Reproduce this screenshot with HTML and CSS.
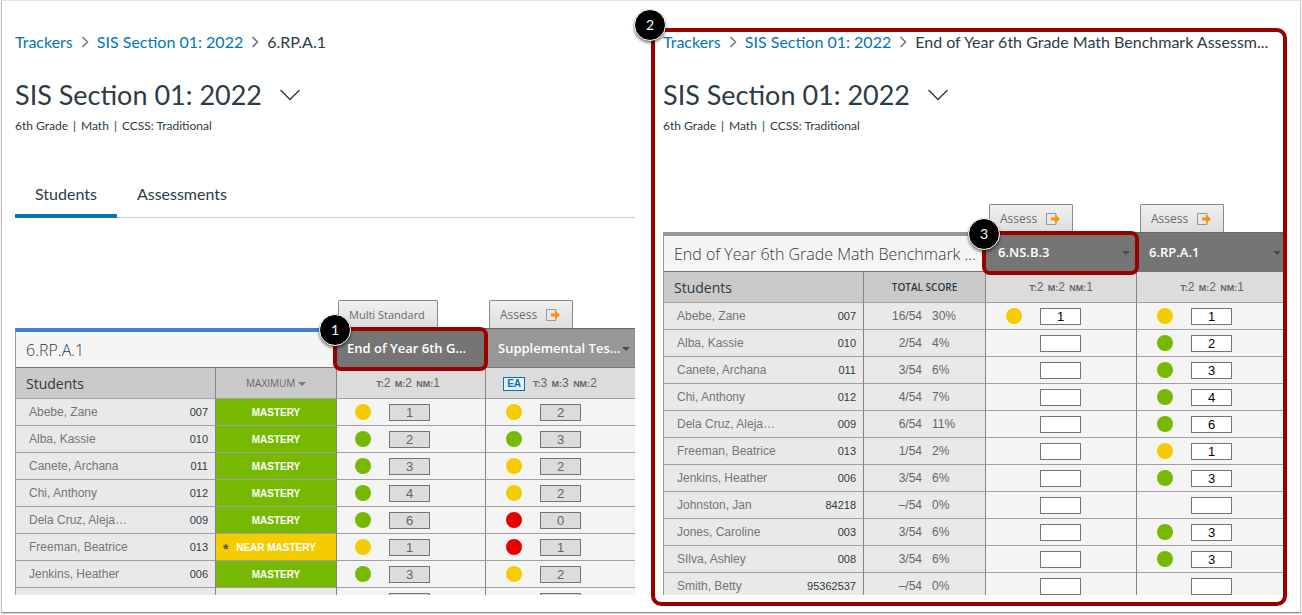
FILE: index.html
```html
<!DOCTYPE html>
<html lang="en">
<head>
    <meta charset="UTF-8">
    <meta name="viewport" content="width=device-width, initial-scale=1.0">
    <title>Trackers</title>
    <link rel="stylesheet" href="styles.css">
</head>
<body>
    <main class="sheet">
        <section class="panel">
            <nav class="breadcrumb">
                <a href="#">Trackers</a>
                <svg class="crumb-arrow" viewBox="0 0 8 12"><path d="M1.5 1 L6.5 6 L1.5 11"/></svg>
                <a href="#">SIS Section 01: 2022</a>
                <svg class="crumb-arrow" viewBox="0 0 8 12"><path d="M1.5 1 L6.5 6 L1.5 11"/></svg>
                <span class="current">6.RP.A.1</span>
            </nav>
            <div class="heading">
                <h1>SIS Section 01: 2022</h1>
                <button class="heading-toggle" aria-label="Change section">
                    <svg viewBox="0 0 20 12"><path d="M0.5 1 L10 10.5 L19.5 1"/></svg>
                </button>
            </div>
            <p class="meta"><span>6th Grade</span><span>|</span><span>Math</span><span>|</span><span>CCSS: Traditional</span></p>
            <div class="tabs">
                <button class="tab active">Students</button>
                <button class="tab">Assessments</button>
            </div>
            <div class="table-wrap by-standard">
                <table class="tracker">
                    <colgroup><col class="col-name"><col class="col-total"><col class="col-first"><col class="col-score"></colgroup>
                    <thead>
                        <tr class="row-actions">
                            <td colspan="2"></td>
                            <td class="first"><button class="action multi">Multi Standard</button></td>
                            <td><button class="action">Assess
                                <svg class="export" viewBox="0 0 14 12"><path class="box" d="M10 3 V0.5 H0.5 V11.5 H10 V9"/><path class="arrow" d="M5 4.5 H9 V1.5 L14 6 L9 10.5 V7.5 H5 Z"/></svg>
                            </button></td>
                        </tr>
                        <tr class="row-title">
                            <th colspan="2" class="title blue">6.RP.A.1</th>
                            <th class="dark first"><span class="col-title">End of Year 6th G...</span><span class="highlight"></span><span class="marker">1</span></th>
                            <th class="dark light"><span class="col-title">Supplemental Tes...</span><span class="caret"></span></th>
                        </tr>
                        <tr class="row-sub">
                            <th class="students">Students</th>
                            <th class="total">MAXIMUM <span class="caret"></span></th>
                            <th class="counts first"><b>T:</b>2 <b>M:</b>2 <b>NM:</b>1</th>
                            <th class="counts with-badge"><span class="ea">EA</span><b>T:</b>3 <b>M:</b>3 <b>NM:</b>2</th>
                        </tr>
                    </thead>
                    <tbody id="standardRows"></tbody>
                </table>
            </div>
        </section>

        <section class="panel outlined">
            <span class="marker">2</span>
            <nav class="breadcrumb">
                <a href="#">Trackers</a>
                <svg class="crumb-arrow" viewBox="0 0 8 12"><path d="M1.5 1 L6.5 6 L1.5 11"/></svg>
                <a href="#">SIS Section 01: 2022</a>
                <svg class="crumb-arrow" viewBox="0 0 8 12"><path d="M1.5 1 L6.5 6 L1.5 11"/></svg>
                <span class="current">End of Year 6th Grade Math Benchmark Assessm...</span>
            </nav>
            <div class="heading">
                <h1>SIS Section 01: 2022</h1>
                <button class="heading-toggle" aria-label="Change section">
                    <svg viewBox="0 0 20 12"><path d="M0.5 1 L10 10.5 L19.5 1"/></svg>
                </button>
            </div>
            <p class="meta"><span>6th Grade</span><span>|</span><span>Math</span><span>|</span><span>CCSS: Traditional</span></p>
            <div class="table-wrap by-assessment">
                <table class="tracker">
                    <colgroup><col class="col-name"><col class="col-total"><col class="col-score"><col class="col-score"></colgroup>
                    <thead>
                        <tr class="row-actions">
                            <td colspan="2"></td>
                            <td><button class="action">Assess
                                <svg class="export" viewBox="0 0 14 12"><path class="box" d="M10 3 V0.5 H0.5 V11.5 H10 V9"/><path class="arrow" d="M5 4.5 H9 V1.5 L14 6 L9 10.5 V7.5 H5 Z"/></svg>
                            </button></td>
                            <td><button class="action">Assess
                                <svg class="export" viewBox="0 0 14 12"><path class="box" d="M10 3 V0.5 H0.5 V11.5 H10 V9"/><path class="arrow" d="M5 4.5 H9 V1.5 L14 6 L9 10.5 V7.5 H5 Z"/></svg>
                            </button></td>
                        </tr>
                        <tr class="row-title">
                            <th colspan="2" class="title">End of Year 6th Grade Math Benchmark ...</th>
                            <th class="dark"><span class="col-title">6.NS.B.3</span><span class="caret"></span><span class="highlight"></span><span class="marker">3</span></th>
                            <th class="dark"><span class="col-title">6.RP.A.1</span><span class="caret"></span></th>
                        </tr>
                        <tr class="row-sub">
                            <th class="students">Students</th>
                            <th class="total strong">TOTAL SCORE</th>
                            <th class="counts"><b>T:</b>2 <b>M:</b>2 <b>NM:</b>1</th>
                            <th class="counts"><b>T:</b>2 <b>M:</b>2 <b>NM:</b>1</th>
                        </tr>
                    </thead>
                    <tbody id="assessmentRows"></tbody>
                </table>
            </div>
        </section>
    </main>

    <script>
        // name, id, level, then [colour, score] for each assessment
        const standardRows = [
            ["Abebe, Zane", "007", "mastery", ["yellow", 1], ["yellow", 2]],
            ["Alba, Kassie", "010", "mastery", ["green", 2], ["green", 3]],
            ["Canete, Archana", "011", "mastery", ["green", 3], ["yellow", 2]],
            ["Chi, Anthony", "012", "mastery", ["green", 4], ["yellow", 2]],
            ["Dela Cruz, Aleja…", "009", "mastery", ["green", 6], ["red", 0]],
            ["Freeman, Beatrice", "013", "near", ["yellow", 1], ["red", 1]],
            ["Jenkins, Heather", "006", "mastery", ["green", 3], ["yellow", 2]],
            ["", "", "", ["", ""], ["", ""]]
        ];

        // name, id, points, percent, then [colour, score] for each standard
        const assessmentRows = [
            ["Abebe, Zane", "007", "16/54", "30%", ["yellow", 1], ["yellow", 1]],
            ["Alba, Kassie", "010", "2/54", "4%", ["", ""], ["green", 2]],
            ["Canete, Archana", "011", "3/54", "6%", ["", ""], ["green", 3]],
            ["Chi, Anthony", "012", "4/54", "7%", ["", ""], ["green", 4]],
            ["Dela Cruz, Aleja…", "009", "6/54", "11%", ["", ""], ["green", 6]],
            ["Freeman, Beatrice", "013", "1/54", "2%", ["", ""], ["yellow", 1]],
            ["Jenkins, Heather", "006", "3/54", "6%", ["", ""], ["green", 3]],
            ["Johnston, Jan", "84218", "–/54", "0%", ["", ""], ["", ""]],
            ["Jones, Caroline", "003", "3/54", "6%", ["", ""], ["green", 3]],
            ["SIlva, Ashley", "008", "3/54", "6%", ["", ""], ["green", 3]],
            ["Smith, Betty", "95362537", "–/54", "0%", ["", ""], ["", ""]]
        ];

        function nameCell(name, id) {
            return `<td class="name"><div class="student"><span>${name}</span><span class="id">${id}</span></div></td>`;
        }

        function scoreCell(cell, label, extra, readonly) {
            return `<td class="score ${extra}"><div class="result"><span class="dot ${cell[0]}"></span>` +
                `<input type="text" value="${cell[1]}" aria-label="${label}" ${readonly ? "readonly" : ""}></div></td>`;
        }

        function levelCell(level) {
            if (level === "mastery") return `<td class="level mastery">MASTERY</td>`;
            if (level === "near") return `<td class="level near"><span class="star">*</span>NEAR MASTERY</td>`;
            return `<td class="level"></td>`;
        }

        document.getElementById("standardRows").innerHTML = standardRows.map(r =>
            `<tr>${nameCell(r[0], r[1])}${levelCell(r[2])}` +
            scoreCell(r[3], r[0] + " End of Year", "first", true) +
            scoreCell(r[4], r[0] + " Supplemental Test", "", true) + `</tr>`
        ).join("");

        document.getElementById("assessmentRows").innerHTML = assessmentRows.map(r =>
            `<tr>${nameCell(r[0], r[1])}<td class="points"><div class="pair"><span>${r[2]}</span><span>${r[3]}</span></div></td>` +
            scoreCell(r[4], r[0] + " 6.NS.B.3", "", false) +
            scoreCell(r[5], r[0] + " 6.RP.A.1", "", false) + `</tr>`
        ).join("");
    </script>
</body>
</html>
```

FILE: styles.css
```css
* { box-sizing: border-box; }
body { margin: 0; height: 100vh; padding: 0 1px 2px; background-color: #fbfbfb; font-family: Lato, sans-serif; color: #2d3b45; }
button { font: inherit; color: inherit; background: none; border: none; padding: 0; cursor: pointer; }

.sheet { display: flex; gap: 16px; height: 100%; padding: 27px 13px 6px; background-color: #fff; border: 1px solid #e2e2e2; border-left-color: #c0c0c0; border-right-color: #c8c8c8; border-bottom-color: #8a8a8a; box-shadow: 0 1px 1px #ddd; }
.panel { position: relative; display: flex; flex-direction: column; flex: 1 1 0; min-width: 0; padding: 4px 0 11px; }
.panel.outlined { flex-basis: 16px; border: 4px solid #990000; border-radius: 10px; padding: 0 0 7px 8px; }

/* Page header */
.breadcrumb { display: flex; align-items: center; gap: 8px; height: 20px; padding-right: 8px; font-size: 16px; line-height: 20px; white-space: nowrap; }
.breadcrumb a { color: #0374b5; text-decoration: none; }
.crumb-arrow { width: 8px; height: 12px; flex: none; fill: none; stroke: #6b7780; stroke-width: 1.6; }
.heading { display: flex; align-items: center; gap: 18px; margin-top: 25px; height: 36px; }
h1 { margin: 0; font-size: 27px; font-weight: 400; line-height: 36px; }
.heading-toggle svg { display: block; width: 20px; height: 12px; fill: none; stroke: #2d3b45; stroke-width: 1.4; }
.meta { display: flex; gap: 5px; margin: 4px 0 0; font-size: 12px; line-height: 18px; }
.tabs { display: flex; margin-top: 40px; height: 43px; border-bottom: 1px solid #c7cdd1; }
.tab { height: 43px; padding: 0 20px 6px; font-size: 16px; }
.tab.active { padding-bottom: 2px; border-bottom: 4px solid #0374b5; }

/* Tables */
.table-wrap { flex: 1; min-height: 0; overflow: hidden; }
.by-standard { margin-top: 82px; }
.by-assessment { margin-top: 69px; }
.tracker { table-layout: fixed; border-collapse: separate; border-spacing: 0; width: 625px; font-family: "Liberation Sans", Arial, sans-serif; font-size: 12px; color: #666; }
.by-standard .tracker { width: 622px; }
.col-name { width: 201px; }
.col-total { width: 122px; }
.by-standard .col-total { width: 121px; }
.col-first { width: 149px; }
.col-score { width: 151px; }
td, th { padding: 0; font-weight: 400; border-right: 1px solid #858585; border-bottom: 1px solid #a0a0a0; }

.row-actions { height: 28px; }
.row-actions td { border: none; padding-left: 3px; vertical-align: bottom; }
.row-actions td.first { padding-left: 1px; }
.action { display: flex; align-items: center; gap: 9px; height: 28px; padding: 0 12px 0 10px; background: linear-gradient(#f0f0f0, #dedede); border: 1px solid #8a8a8a; border-bottom: none; border-radius: 2px 2px 0 0; font-family: "Open Sans", sans-serif; font-size: 12px; color: #6b6b6b; }
.action.multi { font-size: 11px; }
.export { width: 14px; height: 12px; }
.export .box { fill: #e8e8e8; stroke: #999; }
.export .arrow { fill: #ff9000; }

.row-title { height: 40px; font-family: "Open Sans", sans-serif; }
.row-title th { position: relative; text-align: left; border-bottom-color: #757575; }
.title { padding-left: 10px; background-color: #f5f5f5; border-left: 1px solid #999; border-top: 4px solid #979797; font-size: 16px; font-weight: 300; color: #2d3b45; white-space: nowrap; }
.title.blue { border-top-color: #3f81cb; }
.dark { background-color: #757575; border-top: 1px solid #666; color: #fff; font-size: 13px; font-weight: 600; white-space: nowrap; padding-left: 12px; }
.row-title .dark { border-right-color: #757575; }
.dark.first { padding-left: 10px; }
.dark.light { background-color: #979797; border-right-color: #979797; }
.caret { display: inline-block; border: 4px solid transparent; border-top-color: #777; border-bottom: none; vertical-align: middle; }
.dark .caret { position: absolute; right: 6px; top: 18px; border-top-color: #4a4a4a; }

.row-sub { height: 31px; }
.students { padding-left: 10px; text-align: left; background-color: #cacaca; border-left: 1px solid #999; font-family: "Open Sans", sans-serif; font-size: 14px; color: #2d3b45; }
.total { background-color: #cacaca; font-family: "Open Sans", sans-serif; font-size: 10px; color: #666; }
.total.strong { font-weight: 600; color: #2d3b45; }
.counts { background-color: #dcdcdc; font-size: 12px; word-spacing: 1px; text-align: center; }
.counts b { font-size: 9px; }
.counts.first { padding-right: 6px; }
.counts.with-badge { padding-right: 22px; }
.ea { display: inline-block; margin-right: 8px; padding: 0 3px; border: 1px solid #0374b5; background-color: #e8f1f7; font-size: 10px; font-weight: 700; line-height: 12px; color: #0374b5; }

tbody tr { height: 27px; }
.name { background-color: #e9e9e9; border-left: 1px solid #999; }
.student { display: flex; align-items: center; justify-content: space-between; padding: 0 7px 0 13px; color: #757575; }
.id { font-size: 11px; color: #2d3b45; }
.level { position: relative; text-align: center; background-color: #e9e9e9; font-size: 10px; font-weight: 700; color: #fff; }
.mastery { background-color: #76b900; }
.near { background-color: #f5cc00; }
.star { position: absolute; left: 7px; top: 7px; font-size: 14px; color: #555; }
.points { background-color: #e9e9e9; }
.pair { display: flex; gap: 10px; }
.pair span { flex: 1; }
.pair span:first-child { flex: 0 0 58px; text-align: right; }
.score { background-color: #f4f4f4; }
.result { display: flex; align-items: center; gap: 18px; padding-left: 20px; }
.first .result { padding-left: 18px; }
.dot { width: 16px; height: 16px; border-radius: 50%; }
.dot.yellow { background-color: #f5cc00; }
.dot.green { background-color: #76b900; }
.dot.red { background-color: #e60000; }
input { width: 41px; height: 17px; padding: 0; border: 1px solid #757575; background-color: #fff; font-family: "Liberation Sans", Arial, sans-serif; font-size: 13px; text-align: center; color: #000; }
input:read-only { background-color: #dcdcdc; color: #666; }

/* Callouts */
.highlight { position: absolute; inset: -2px -3px -4px -4px; z-index: 1; border: 4px solid #990000; border-radius: 8px; }
.marker { position: absolute; left: -18px; top: -15px; z-index: 2; width: 32px; height: 32px; border: 1px solid #fff; border-radius: 50%; background-color: #000; box-shadow: 0 2px 3px rgba(0, 0, 0, 0.5); font-family: Lato, sans-serif; font-size: 14px; font-weight: 400; line-height: 30px; text-align: center; color: #fff; }
.outlined > .marker { left: -21px; top: -23px; }
```
